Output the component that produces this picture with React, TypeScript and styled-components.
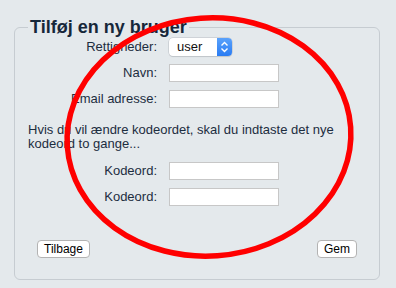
import React from "react";
import styled, { createGlobalStyle } from "styled-components";

const Global = createGlobalStyle`
  html, body { margin: 0; padding: 0; background: #e4e9ec; }
  body { font-family: "Liberation Sans", Arial, sans-serif; }
`;

const Page = styled.div`
  position: relative;
  width: 396px;
  height: 288px;
  box-sizing: border-box;
  padding: 17px 16px 0 14px;
  overflow: hidden;
`;

const Fieldset = styled.fieldset`
  margin: 0;
  border: 1px solid #c6ccd1;
  border-radius: 6px;
  padding: 1px 13px 21px 13px;
  min-width: 0;
`;

const Legend = styled.legend`
  padding: 0 2px;
  font-size: 18px;
  font-weight: bold;
  color: #16273a;
  line-height: 20px;
`;

const FormGrid = styled.div`
  display: grid;
  grid-template-columns: 129px 110px;
  column-gap: 12px;
  row-gap: 8px;
  align-items: center;
  margin-top: ${(p: { $top?: number }) => p.$top ?? 0}px;
`;

const Label = styled.label`
  text-align: right;
  font-size: 13px;
  line-height: 18px;
  color: #1c2d3f;
`;

const TextInput = styled.input`
  box-sizing: border-box;
  width: 110px;
  height: 18px;
  margin: 0;
  padding: 0 3px;
  border: 1px solid #c7c7c7;
  background: #fff;
  font: 13px "Liberation Sans", Arial, sans-serif;
  outline: none;
`;

const Select = styled.div`
  display: flex;
  width: 63px;
  height: 18px;
  border-radius: 4px;
  background: #fff;
  box-shadow: 0 0 0 0.5px #b9bec4, 0 1px 1px rgba(0,0,0,0.12);
  overflow: hidden;
`;

const SelectText = styled.span`
  flex: 1;
  padding-left: 8px;
  font-size: 13px;
  line-height: 18px;
  color: #111;
`;

const Stepper = styled.span`
  width: 15px;
  display: flex;
  align-items: center;
  justify-content: center;
  background: linear-gradient(#5aa2fb, #2a7cf3);
`;

const Note = styled.p`
  margin: 15px 0 0 0;
  font-size: 13px;
  line-height: 14px;
  color: #1c2d3f;
`;

const ButtonRow = styled.div`
  display: flex;
  justify-content: space-between;
  padding: 0 9px;
  margin-top: 34px;
`;

const Button = styled.button`
  height: 18px;
  padding: 0 6px;
  border: 1px solid #b3b3b3;
  border-radius: 4px;
  background: #fff;
  font: 12px "Liberation Sans", Arial, sans-serif;
  color: #000;
  line-height: 16px;
`;

const Overlay = styled.svg`
  position: absolute;
  left: 0;
  top: 0;
  pointer-events: none;
`;

export default function App() {
  return (
    <Page>
      <Global />
      <Fieldset>
        <Legend>Tilføj en ny bruger</Legend>
        <FormGrid>
          <Label>Rettigheder:</Label>
          <Select>
            <SelectText>user</SelectText>
            <Stepper>
              <svg width="9" height="12" viewBox="0 0 9 12">
                <path d="M1.5 4.5 L4.5 1.5 L7.5 4.5 M1.5 7.5 L4.5 10.5 L7.5 7.5" stroke="#fff" strokeWidth="1.4" fill="none" />
              </svg>
            </Stepper>
          </Select>
          <Label>Navn:</Label>
          <TextInput type="text" />
          <Label>Email adresse:</Label>
          <TextInput type="text" />
        </FormGrid>
        <Note>Hvis du vil ændre kodeordet, skal du indtaste det nye kodeord to gange...</Note>
        <FormGrid $top={11}>
          <Label>Kodeord:</Label>
          <TextInput type="password" />
          <Label>Kodeord:</Label>
          <TextInput type="password" />
        </FormGrid>
        <ButtonRow>
          <Button>Tilbage</Button>
          <Button>Gem</Button>
        </ButtonRow>
      </Fieldset>
      <Overlay width="396" height="288" viewBox="0 0 396 288">
        <ellipse cx="209" cy="137" rx="142" ry="119" transform="rotate(-4 209 137)" fill="none" stroke="#ff0000" strokeWidth="5.5" />
      </Overlay>
    </Page>
  );
}
